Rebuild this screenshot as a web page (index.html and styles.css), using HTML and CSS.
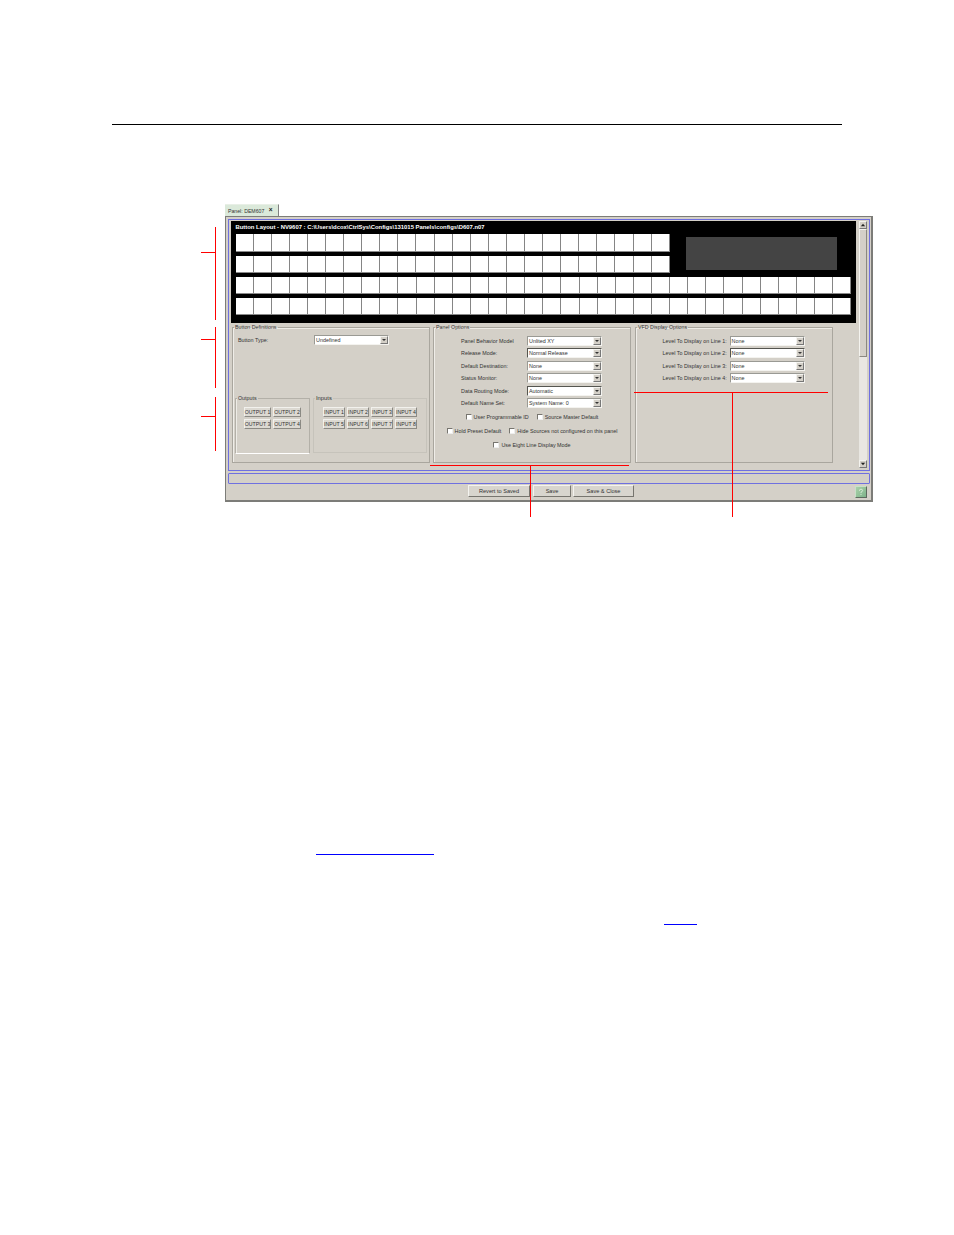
FILE: index.html
```html
<!DOCTYPE html>
<html lang="en">
<head>
<meta charset="utf-8">
<title>Panel: DEM607</title>
<link rel="stylesheet" href="styles.css">
</head>
<body>
<div class="page">
  <hr class="rule">
  <div class="figure">
    <div class="tab"><span>Panel: DEM607</span><b class="close">×</b></div>
    <div class="window">
      <div class="frame">
        <div class="main">
          <div class="layout">
            <div class="layout-title">Button Layout - NV9607 : C:\Users\dcox\CtrlSys\Configs\131015 Panels\configs\D607.n07</div>
            <div class="layout-top">
              <div class="short-rows">
                <div class="keys keys-24"><i class="key"></i><i class="key"></i><i class="key"></i><i class="key"></i><i class="key"></i><i class="key"></i><i class="key"></i><i class="key"></i><i class="key"></i><i class="key"></i><i class="key"></i><i class="key"></i><i class="key"></i><i class="key"></i><i class="key"></i><i class="key"></i><i class="key"></i><i class="key"></i><i class="key"></i><i class="key"></i><i class="key"></i><i class="key"></i><i class="key"></i><i class="key"></i></div>
                <div class="keys keys-24"><i class="key"></i><i class="key"></i><i class="key"></i><i class="key"></i><i class="key"></i><i class="key"></i><i class="key"></i><i class="key"></i><i class="key"></i><i class="key"></i><i class="key"></i><i class="key"></i><i class="key"></i><i class="key"></i><i class="key"></i><i class="key"></i><i class="key"></i><i class="key"></i><i class="key"></i><i class="key"></i><i class="key"></i><i class="key"></i><i class="key"></i><i class="key"></i></div>
              </div>
              <div class="vfd"></div>
            </div>
            <div class="keys keys-34"><i class="key"></i><i class="key"></i><i class="key"></i><i class="key"></i><i class="key"></i><i class="key"></i><i class="key"></i><i class="key"></i><i class="key"></i><i class="key"></i><i class="key"></i><i class="key"></i><i class="key"></i><i class="key"></i><i class="key"></i><i class="key"></i><i class="key"></i><i class="key"></i><i class="key"></i><i class="key"></i><i class="key"></i><i class="key"></i><i class="key"></i><i class="key"></i><i class="key"></i><i class="key"></i><i class="key"></i><i class="key"></i><i class="key"></i><i class="key"></i><i class="key"></i><i class="key"></i><i class="key"></i><i class="key"></i></div>
            <div class="keys keys-34"><i class="key"></i><i class="key"></i><i class="key"></i><i class="key"></i><i class="key"></i><i class="key"></i><i class="key"></i><i class="key"></i><i class="key"></i><i class="key"></i><i class="key"></i><i class="key"></i><i class="key"></i><i class="key"></i><i class="key"></i><i class="key"></i><i class="key"></i><i class="key"></i><i class="key"></i><i class="key"></i><i class="key"></i><i class="key"></i><i class="key"></i><i class="key"></i><i class="key"></i><i class="key"></i><i class="key"></i><i class="key"></i><i class="key"></i><i class="key"></i><i class="key"></i><i class="key"></i><i class="key"></i><i class="key"></i></div>
          </div>
          <div class="groups">
            <fieldset class="group group-def">
              <legend>Button Definitions</legend>
              <div class="field field-def">
                <span class="label">Button Type:</span>
                <span class="select"><span class="value">Undefined</span><span class="arrow"></span></span>
              </div>
              <div class="io">
                <fieldset class="sub sub-out">
                  <legend>Outputs</legend>
                  <div class="io-grid io-out">
                    <span class="btn">OUTPUT 1</span><span class="btn">OUTPUT 2</span>
                    <span class="btn">OUTPUT 3</span><span class="btn">OUTPUT 4</span>
                  </div>
                </fieldset>
                <fieldset class="sub sub-in">
                  <legend>Inputs</legend>
                  <div class="io-grid io-in">
                    <span class="btn">INPUT 1</span><span class="btn">INPUT 2</span><span class="btn">INPUT 3</span><span class="btn">INPUT 4</span>
                    <span class="btn">INPUT 5</span><span class="btn">INPUT 6</span><span class="btn">INPUT 7</span><span class="btn">INPUT 8</span>
                  </div>
                </fieldset>
              </div>
            </fieldset>
            <fieldset class="group group-panel">
              <legend>Panel Options</legend>
              <div class="form form-panel">
                <span class="label">Panel Behavior Model</span><span class="select"><span class="value">Unlited XY</span><span class="arrow"></span></span>
                <span class="label">Release Mode:</span><span class="select dark"><span class="value">Normal Release</span><span class="arrow"></span></span>
                <span class="label">Default Destination:</span><span class="select"><span class="value">None</span><span class="arrow"></span></span>
                <span class="label">Status Monitor:</span><span class="select"><span class="value">None</span><span class="arrow"></span></span>
                <span class="label">Data Routing Mode:</span><span class="select dark"><span class="value">Automatic</span><span class="arrow"></span></span>
                <span class="label">Default Name Set:</span><span class="select"><span class="value">System Name: 0</span><span class="arrow"></span></span>
              </div>
              <div class="checks">
                <div class="check-row"><span class="check"><i class="box"></i>User Programmable ID</span><span class="check"><i class="box"></i>Source Master Default</span></div>
                <div class="check-row"><span class="check"><i class="box"></i>Hold Preset Default</span><span class="check"><i class="box"></i>Hide Sources not configured on this panel</span></div>
                <div class="check-row"><span class="check"><i class="box"></i>Use Eight Line Display Mode</span></div>
              </div>
            </fieldset>
            <fieldset class="group group-vfd">
              <legend>VFD Display Options</legend>
              <div class="form form-vfd">
                <span class="label">Level To Display on Line 1:</span><span class="select"><span class="value">None</span><span class="arrow"></span></span>
                <span class="label">Level To Display on Line 2:</span><span class="select dark"><span class="value">None</span><span class="arrow"></span></span>
                <span class="label">Level To Display on Line 3:</span><span class="select"><span class="value">None</span><span class="arrow"></span></span>
                <span class="label">Level To Display on Line 4:</span><span class="select"><span class="value">None</span><span class="arrow"></span></span>
              </div>
            </fieldset>
          </div>
        </div>
        <div class="scrollbar">
          <span class="scroll-btn"><svg viewBox="0 0 7 7" class="tri"><path d="M3.5 2 L6 5 H1 Z"/></svg></span>
          <span class="thumb"></span>
          <span class="track"></span>
          <span class="scroll-btn"><svg viewBox="0 0 7 7" class="tri"><path d="M1 2 H6 L3.5 5 Z"/></svg></span>
        </div>
      </div>
      <div class="status"></div>
      <div class="actions">
        <span class="action action-revert">Revert to Saved</span>
        <span class="action action-save">Save</span>
        <span class="action action-close">Save &amp; Close</span>
        <span class="help"><svg viewBox="0 0 10 10" class="help-icon"><path d="M3 3.5 Q3 1.5 5 1.5 Q7 1.5 7 3.2 Q7 4.4 5 5.2 V6.4 M5 7.6 V8.8"/></svg></span>
      </div>
    </div>
  </div>
  <a class="xref xref-a" href="#"></a>
  <a class="xref xref-b" href="#"></a>

  <span class="red v c1"></span><span class="red h t1"></span>
  <span class="red v c2"></span><span class="red h t2"></span>
  <span class="red v c3"></span><span class="red h t3"></span>
  <span class="red h b1"></span><span class="red v b1v"></span>
  <span class="red h b2"></span><span class="red v b2v"></span>
</div>
</body>
</html>
```
FILE: styles.css
```css
* { box-sizing: border-box; }
html, body { margin: 0; padding: 0; background: #fff; }
.page {
  position: relative;
  width: 954px;
  height: 1235px;
  overflow: hidden;
  padding-top: 124px;
  font-family: "Liberation Sans", Arial, sans-serif;
  font-size: 5.4px;
  color: #333;
}
.rule { height: 1px; width: 730px; margin: 0 0 0 112px; border: 0; background: #000; }

/* figure */
.figure { width: 648px; margin: 79px 0 0 225px; }
.tab {
  width: 54px; height: 12px;
  display: flex; align-items: center; justify-content: space-between;
  padding: 0 5.5px 0 3px;
  background: #dbe9da;
  border-right: 1px solid #808080;
  border-top: 1px solid #e8efe6;
  font-size: 5.2px; color: #333;
}
.close { font-size: 6.5px; color: #222; line-height: 1; }
.window {
  height: 286px;
  background: #d4d0c8;
  border: solid #7c7c78;
  border-width: 1px 2px 2px 1px;
  padding: 2px 0 0 2px;
}
.frame {
  width: 642px; height: 252px;
  border: 1px solid #6f70e0;
  padding: 1px 0 0 2px;
  display: flex;
}
.main { width: 625px; }

/* button layout */
.layout { height: 102px; background: #000; padding: 2px 0 0 4.5px; }
.layout-title { height: 11.4px; line-height: 9px; color: #fff; font-weight: bold; font-size: 5.9px; white-space: nowrap; }
.layout-top { display: flex; align-items: flex-start; }
.short-rows { width: 435px; }
.keys { display: grid; height: 17.2px; margin-bottom: 4px; }
.keys-24 { grid-template-columns: repeat(24, 18.1px); }
.keys-34 { grid-template-columns: repeat(34, 18.11px); }
.key { display: block; background: #fff; border-right: 1px solid #858585; border-bottom: 1px solid #8a8a8a; }
.vfd { width: 151px; height: 33px; margin: 2.6px 0 0 15.5px; background: #444; }

/* option groups */
.groups { display: flex; margin: 1px 0 0 1px; height: 139px; }
fieldset { margin: 0; padding: 0; min-width: 0; }
legend { padding: 0 1px; margin-left: 1px; line-height: 6px; height: 6px; color: #333; font-size: 5.3px; }
.group { width: 198px; height: 139px; border: 1px solid #a9a69e; box-shadow: inset 1px 1px 0 #efede8; margin-right: 3px; }
.group-panel { width: 198px; margin-right: 4px; }
.group-vfd { width: 198px; margin-right: 0; }

.label { color: #333; white-space: nowrap; line-height: 10px; }
.select {
  display: flex; align-items: center; justify-content: space-between;
  height: 10px; width: 75px;
  background: #fff;
  border: 1px solid;
  border-color: #9a9a94 #f4f3ef #f4f3ef #9a9a94;
  padding-right: 0;
}
.select.dark { border-color: #55554f #f4f3ef #f4f3ef #55554f; }
.value { padding-left: 1px; color: #333; white-space: nowrap; }
.arrow {
  position: relative;
  width: 8px; height: 8px;
  background: #d4d0c8;
  border: 1px solid;
  border-color: #f4f3ef #777 #777 #f4f3ef;
}
.arrow::after {
  content: ""; position: absolute; left: 1px; top: 2px;
  border: 2px solid transparent; border-top: 2px solid #333; border-bottom: 0;
}

.field-def { display: grid; grid-template-columns: 76px 75px; padding: 5px 0 0 5px; }
.io { display: flex; margin: 50px 0 0 2px; }
.sub-out { width: 75px; height: 59px; border: 1px solid #b3b0a8; border-bottom: 1px solid #fff; box-shadow: inset 1px 0 0 #eeece7; margin-right: 3px; }
.sub-in { width: 114px; height: 58px; border: 1px solid #c6c3bb; }
.sub legend { margin-left: 1px; }
.sub-in legend { font-size: 5.8px; margin-left: 1px; }
.io-grid { display: grid; row-gap: 2px; }
.io-out { grid-template-columns: 27px 28px; column-gap: 2px; padding: 6px 0 0 8px; }
.io-in { grid-template-columns: repeat(4, 22px); column-gap: 2px; padding: 5.5px 0 0 9px; }
.btn {
  display: flex; align-items: center; justify-content: center;
  height: 10px;
  background: #dcd9d2;
  border: 1px solid;
  border-color: #f2f1ed #8c8a84 #8c8a84 #f2f1ed;
  color: #333; font-size: 5.2px; white-space: nowrap;
}

.form { display: grid; row-gap: 2.6px; align-items: center; }
.form-panel { grid-template-columns: 66px 75px; padding: 5.5px 0 0 27px; }
.form-vfd { grid-template-columns: 67px 75px; padding: 5.5px 0 0 26.5px; }

.checks { margin-top: 5.5px; display: flex; flex-direction: column; row-gap: 7.6px; }
.check-row { display: flex; justify-content: center; column-gap: 8px; height: 6.4px; }
.check { display: flex; align-items: center; column-gap: 2px; color: #333; white-space: nowrap; }
.box { width: 6px; height: 6px; background: #fff; border: 1px solid; border-color: #77756f #eee #eee #77756f; }

/* scrollbar */
.scrollbar { width: 8px; margin-left: 3px; height: 247px; display: flex; flex-direction: column; }
.scroll-btn { display: block; height: 8px; background: #d4d0c8; border: 1px solid; border-color: #f4f3ef #777 #777 #f4f3ef; }
.tri { display: block; width: 6px; height: 6px; fill: #222; }
.thumb { display: block; height: 128px; background: #d4d0c8; border: 1px solid; border-color: #f4f3ef #8a8880 #8a8880 #f4f3ef; }
.track { display: block; flex: 1; background: #e9e7e2; }

/* status + actions */
.status { width: 642px; height: 11px; margin-top: 2px; border: 1px solid #6f70e0; border-radius: 1px; }
.actions { display: flex; align-items: flex-start; margin-top: 1px; padding-left: 240px; }
.action {
  display: flex; align-items: center; justify-content: center;
  height: 12px;
  background: #d8d5ce;
  border: 1px solid;
  border-color: #f4f3ef #77756f #77756f #f4f3ef;
  color: #333; font-size: 5.6px;
}
.action-revert { width: 62px; margin-right: 3px; }
.action-save { width: 38px; margin-right: 2px; }
.action-close { width: 61px; }
.help {
  display: flex; align-items: center; justify-content: center;
  width: 12px; height: 12px; margin: 1px 0 0 221px;
  background: linear-gradient(135deg, #a8d0a8, #7fb48a);
  border: 1px solid;
  border-color: #c8e0c8 #5d6a5d #5d6a5d #c8e0c8;
}
.help-icon { width: 8px; height: 8px; fill: none; stroke: #d9ecd9; stroke-width: 1.2; }

/* empty cross-reference link underlines */
.xref { display: block; height: 1px; background: #00f; }
.xref-a { width: 118px; margin: 352px 0 0 316px; }
.xref-b { width: 33px; margin: 69px 0 0 664px; }

/* callouts drawn over the screenshot */
.red { position: absolute; background: #f00; }
.red.v { width: 1px; }
.red.h { height: 1px; }
.c1 { left: 215px; top: 227px; height: 93px; }
.t1 { left: 201px; top: 252px; width: 14px; }
.c2 { left: 215px; top: 327px; height: 61px; }
.t2 { left: 201px; top: 339px; width: 14px; }
.c3 { left: 215px; top: 397px; height: 54px; }
.t3 { left: 201px; top: 416px; width: 14px; }
.b1 { left: 430px; top: 465px; width: 199px; }
.b1v { left: 530px; top: 465px; height: 52px; }
.b2 { left: 634px; top: 392px; width: 194px; }
.b2v { left: 732px; top: 392px; height: 125px; }
```
